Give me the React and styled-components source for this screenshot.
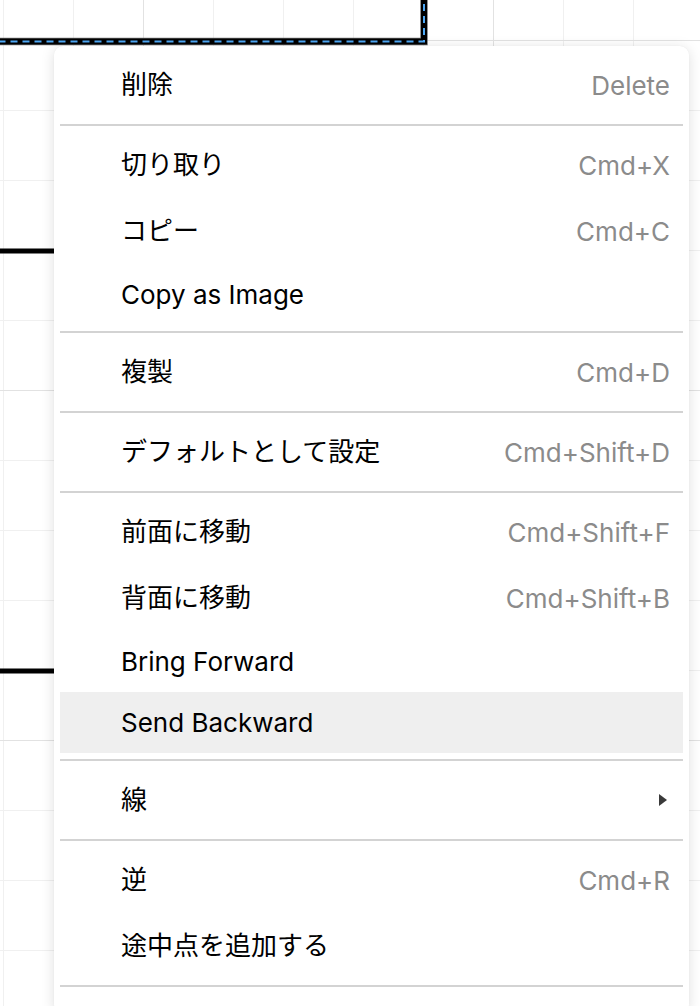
import React from 'react'
import styled, { createGlobalStyle } from 'styled-components'

const GlobalStyle = createGlobalStyle`
  html, body {
    margin: 0;
    padding: 0;
    background: #fff;
  }
  body {
    font-family: "Inter", "Noto Sans CJK JP", sans-serif;
    overflow: hidden;
  }
`

const Canvas = styled.div`
  position: relative;
  width: 700px;
  height: 1006px;
  overflow: hidden;
  background-color: #fff;
  background-image:
    linear-gradient(to right, #e2e2e2 1px, transparent 1px),
    linear-gradient(to bottom, #e2e2e2 1px, transparent 1px),
    linear-gradient(to right, #f0f0f0 1px, transparent 1px),
    linear-gradient(to bottom, #f0f0f0 1px, transparent 1px);
  background-size: 350px 350px, 350px 350px, 70px 70px, 70px 70px;
  background-position: 143px 40px, 143px 40px, 3px 40px, 3px 40px;
`

const Drawing = styled.svg`
  position: absolute;
  inset: 0;
  width: 700px;
  height: 1006px;
`

const Menu = styled.div`
  position: absolute;
  left: 54px;
  top: 46px;
  width: 635px;
  box-sizing: border-box;
  padding: 6px 6px 20px;
  background: #fff;
  border-radius: 9px;
  box-shadow: 0 2px 14px rgba(0, 0, 0, 0.13), 0 0 1px rgba(0, 0, 0, 0.08);
`

const Item = styled.div`
  display: flex;
  align-items: center;
  justify-content: space-between;
  box-sizing: border-box;
  height: ${p => (p.$latin ? 61 : 66)}px;
  padding: 0 13px 0 61px;
  background: ${p => (p.$active ? '#efefef' : 'transparent')};
  font-size: 26px;
  color: #000;
  cursor: default;
`

const Label = styled.span`
  white-space: nowrap;
  padding-bottom: ${p => (p.$latin ? 0 : 6)}px;
`

const Shortcut = styled.span`
  color: #8b8b8b;
  white-space: nowrap;
`

const Separator = styled.div`
  height: 2px;
  margin: 6px 0;
  background: #d3d3d3;
`

const SubArrow = styled.span`
  width: 0;
  height: 0;
  margin-right: 3px;
  border-top: 6px solid transparent;
  border-bottom: 6px solid transparent;
  border-left: 8px solid #3a3a3a;
`

const groups = [
  [{ label: '削除', key: 'Delete' }],
  [
    { label: '切り取り', key: 'Cmd+X' },
    { label: 'コピー', key: 'Cmd+C' },
    { label: 'Copy as Image', latin: true },
  ],
  [{ label: '複製', key: 'Cmd+D' }],
  [{ label: 'デフォルトとして設定', key: 'Cmd+Shift+D' }],
  [
    { label: '前面に移動', key: 'Cmd+Shift+F' },
    { label: '背面に移動', key: 'Cmd+Shift+B' },
    { label: 'Bring Forward', latin: true },
    { label: 'Send Backward', latin: true, active: true },
  ],
  [{ label: '線', sub: true }],
  [
    { label: '逆', key: 'Cmd+R' },
    { label: '途中点を追加する' },
  ],
]

function Shapes() {
  return (
    <Drawing viewBox="0 0 700 1006">
      <rect x="-200" y="-200" width="624" height="241.5" fill="none" stroke="#707070" strokeWidth="7.5" />
      <rect x="-200" y="-200" width="624" height="241.5" fill="none" stroke="#000" strokeWidth="6" />
      <rect x="-200" y="-200" width="624" height="241.5" fill="none" stroke="#4ea8f5" strokeWidth="2" strokeDasharray="7 5" />
      <line x1="-10" y1="251" x2="300" y2="251" stroke="#000" strokeWidth="5" />
      <line x1="-10" y1="671" x2="300" y2="671" stroke="#000" strokeWidth="5" />
    </Drawing>
  )
}

export default function App() {
  return (
    <>
      <GlobalStyle />
      <Canvas>
        <Shapes />
        <Menu>
          {groups.map((group, gi) => (
            <React.Fragment key={gi}>
              {group.map(item => (
                <Item key={item.label} $latin={item.latin} $active={item.active}>
                  <Label $latin={item.latin}>{item.label}</Label>
                  {item.key && <Shortcut>{item.key}</Shortcut>}
                  {item.sub && <SubArrow />}
                </Item>
              ))}
              <Separator />
            </React.Fragment>
          ))}
        </Menu>
      </Canvas>
    </>
  )
}
